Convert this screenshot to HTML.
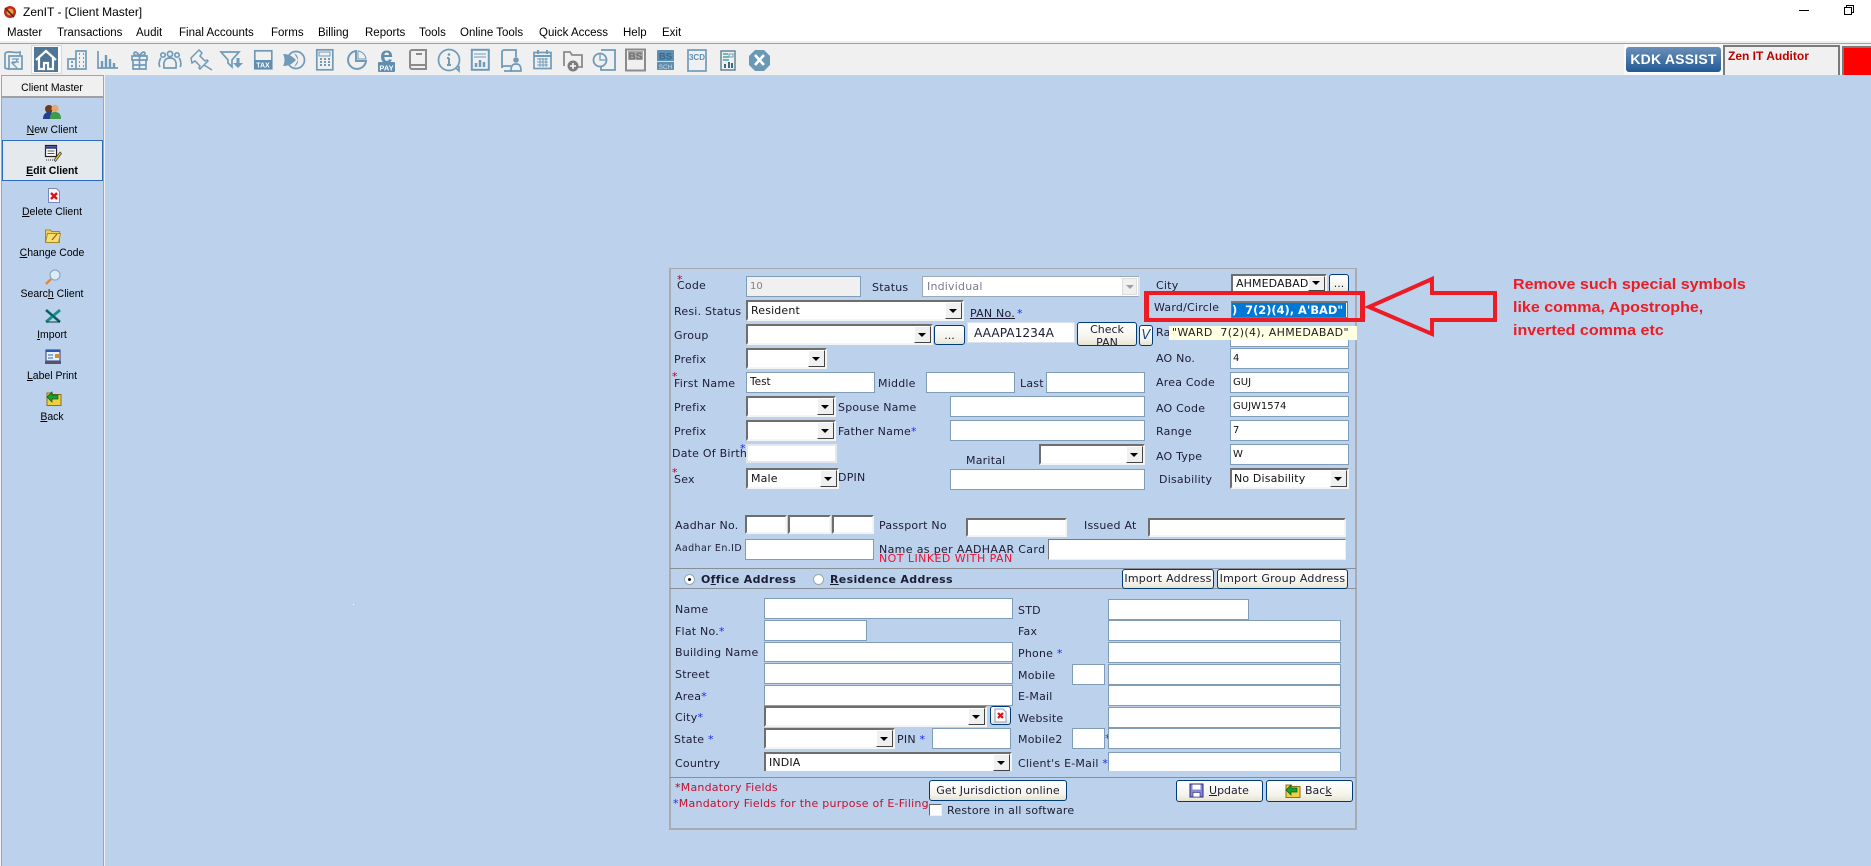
<!DOCTYPE html>
<html><head><meta charset="utf-8"><title>ZenIT - [Client Master]</title>
<style>
html,body{margin:0;padding:0;background:#bcd1eb}
#r{position:relative;width:1871px;height:866px;overflow:hidden;background:#bcd1eb;font-family:"DejaVu Sans",sans-serif}
#r div,#r span.a{position:absolute;box-sizing:border-box}
.m{font:11.5px/16px "Liberation Sans",sans-serif;color:#000;white-space:nowrap;top:25px}
.p{font:11.4px/16px "Liberation Sans",sans-serif;color:#000;white-space:nowrap;width:102px;left:1px;text-align:center;transform:scaleX(.92)}
.t{font:11px/16px "DejaVu Sans",sans-serif;color:#1c1c34;white-space:nowrap;letter-spacing:.22px;margin-top:1px}
.i{background:#fff;border:1px solid #7f9db9;font:10px/19px "DejaVu Sans",sans-serif;color:#111;padding-left:2px;white-space:nowrap;overflow:hidden}
.u{background:#fff;border:2px solid;border-color:#6e6e6e #f4f4f4 #f4f4f4 #6e6e6e}
.s{background:#fff;border:2px solid;border-color:#6e6e6e #f4f4f4 #f4f4f4 #6e6e6e;font:11px/17px "DejaVu Sans",sans-serif;color:#111;padding-left:3px;white-space:nowrap;letter-spacing:.15px}
.s i{position:absolute;right:0;top:0;bottom:0;width:15px;background:#f0f0f0;border:1px solid;border-color:#fff #444 #444 #fff}
.s i:after{content:"";position:absolute;left:3px;top:6px;border:4px solid transparent;border-top:4px solid #000;border-bottom:0}
.s.sm i:after{top:4px}
.b{background:linear-gradient(#fff,#f4f3ea 70%,#e6e3d2);border:1px solid #003c74;border-radius:3px;font:11px/17px "DejaVu Sans",sans-serif;color:#1c1c34;text-align:center;white-space:nowrap;overflow:hidden}
.l{height:1px;background:#8a8f96;left:670px;width:686px}
.st{font:11px/12px "DejaVu Sans",sans-serif}
.cr{color:#b00020}.cb{color:#1c28f0}
</style></head><body><div id="r">

<div style="left:0;top:0;width:1871px;height:41px;background:#fff"></div>
<div style="left:0;top:41px;width:1871px;height:2px;background:#efefef"></div>
<div style="left:0;top:43px;width:1871px;height:1px;background:#a0a0a0"></div>
<div style="left:0;top:44px;width:1871px;height:31px;background:#f0f0f0"></div>

<svg style="position:absolute;left:3px;top:5px" width="14" height="14" viewBox="0 0 14 14"><circle cx="7" cy="7" r="6" fill="#c8261c"/><circle cx="7" cy="7" r="3.5" fill="#e9a33a"/><path d="M2 3l9 9" stroke="#5a2a10" stroke-width="1.6"/></svg>
<div style="left:23px;top:4px;font:12px/16px 'Liberation Sans',sans-serif;color:#000;white-space:nowrap">ZenIT - [Client Master]</div>
<div style="left:1799px;top:10px;width:10px;height:1px;background:#000"></div>
<div style="left:1846px;top:5px;width:8px;height:8px;border:1px solid #000"></div>
<div style="left:1844px;top:7px;width:8px;height:8px;border:1px solid #000;background:#fff"></div>

<div class="m" style="left:7px">Master</div>
<div class="m" style="left:57px">Transactions</div>
<div class="m" style="left:136px">Audit</div>
<div class="m" style="left:179px">Final Accounts</div>
<div class="m" style="left:271px">Forms</div>
<div class="m" style="left:318px">Billing</div>
<div class="m" style="left:365px">Reports</div>
<div class="m" style="left:419px">Tools</div>
<div class="m" style="left:460px">Online Tools</div>
<div class="m" style="left:539px">Quick Access</div>
<div class="m" style="left:623px">Help</div>
<div class="m" style="left:662px">Exit</div>

<div style="left:31px;top:45px;width:31px;height:29px;background:#fafafa;border:1px solid #d8d8d8"></div>
<div style="left:34px;top:47px;width:24px;height:25px;background:#4f7596"></div>

<svg style="position:absolute;left:0;top:0" width="800" height="76" viewBox="0 0 800 76" font-family="Liberation Sans,sans-serif">
<g fill="none" stroke="#6f9bb9" stroke-width="1.7">
<path d="M5 53c5-3 10 1 15-1v3M5 53v15c2 1 3 1 4 1"/><path d="M9 56h13v13H9z"/><path d="M12 59h7M12 62h7M17 59c0 4-3 4-5 4l5 5" stroke-width="1.3"/>
<path d="M36 60l10-9 10 9M39 58v11h5v-6h4v6h5V58" stroke="#fff" stroke-width="2.2"/>
<path d="M76 51h10v18H76zM68 59h8v10h-8z"/><path d="M79 54h1M83 54h1M79 58h1M83 58h1M79 62h1M83 62h1M79 66h1M83 66h1M71 62h2M71 66h2" stroke-width="2"/>
<path d="M98 51v17h20"/><path d="M102 68v-7M106 68V55M110 68v-9M114 68v-5" stroke-width="2.4"/>
<path d="M132 56h15v4h-15zM133 60h13v9h-13zM139.500 56v13M133 65h13M139.500 56c-3-6-7-4-5-1zM139.500 56c3-6 7-4 5-1z"/>
<circle cx="170" cy="54" r="2.6"/><circle cx="163" cy="55" r="2.2"/><circle cx="177" cy="55" r="2.2"/><path d="M164 68c-1-8 2-10 6-10s7 2 6 10zM160 67c-2-3 0-8 1-9M180 67c2-3 0-8-1-9"/>
<path d="M191 58l8-8 3 3-2 3 5 5 2-1 1 1-8 8-1-1 1-2-5-5-3 2zM204 65l8 5" stroke-width="1.500"/>
<path d="M221 52h18l-7 8v7l-4-4v-3z"/><path d="M238 58v6" stroke="#6f9bb9" stroke-width="3"/><path d="M233 63h10l-5 5z" fill="#6f9bb9" stroke="none"/>
<rect x="254.800" y="50.800" width="17" height="18"/>
<rect x="254" y="60" width="18" height="9" fill="#5f8eae" stroke="none"/>
<circle cx="296" cy="60" r="8.500"/><path d="M283 54c6 0 9 2 13 6-4 4-7 6-13 6 2-4 2-8 0-12z" fill="#6f9bb9" stroke="none"/><path d="M294 53a8 8 0 0 1 0 14l4-7z" fill="#6f9bb9" stroke="none"/>
<rect x="316.800" y="49.800" width="16" height="20"/><rect x="319" y="52" width="11" height="4" stroke-width="1"/><path d="M320 59h2M324 59h2M328 59h2M320 62h2M324 62h2M328 62h2M320 65h2M324 65h2M328 65h2" stroke-width="2"/>
<path d="M356 51a9 9 0 1 0 10 10h-10z" stroke-width="2"/><path d="M358 51a9 9 0 0 1 8 8h-8z" stroke-width="1" fill="none"/>
<text x="386.500" y="63" text-anchor="middle" font-size="23" font-weight="bold" fill="#5f8eae" stroke="none">e</text>
<rect x="378" y="62" width="17" height="10" rx="1" fill="#5f8eae" stroke="none"/>
<text x="386.500" y="70.500" text-anchor="middle" font-size="7.500" font-weight="bold" fill="#fff" stroke="none">PAY</text>
<text x="263" y="67.500" text-anchor="middle" font-size="7" font-weight="bold" fill="#fff" stroke="none">TAX</text>

<path d="M410 52a2 2 0 0 1 2-2h14v19h-14a2 2 0 0 1-2-2zM410 65h16M416 54h6" stroke="#8b8b8b" stroke-width="2"/>
<circle cx="449" cy="60" r="10.500"/><path d="M456 68l3 3v-5" /><path d="M449 58v7M447 65h4M447 58h2" stroke-width="2"/><circle cx="449" cy="54.500" r="1.300" fill="#6f9bb9" stroke="none"/>
<rect x="471.800" y="49.800" width="17" height="20" stroke-width="2"/><path d="M474 54h12M474 57h12" stroke-width="1"/><path d="M476 67v-4M480 67v-7M484 67v-5" stroke-width="2.500"/>
<path d="M502 68V52a2 2 0 0 1 2-2h12v7M502 68a2 2 0 0 1 2-2h7M504 71h8" stroke-width="1.800"/><circle cx="516" cy="60" r="2.800" fill="#6f9bb9" stroke="none"/><path d="M511 71c0-6 2-7 5-7s5 1 5 7z"/>
<rect x="534" y="52.500" width="17" height="16"/><path d="M534 56h17" stroke-width="2"/><path d="M538 50v4M547 50v4" stroke-width="2"/><path d="M537 59h11M537 62h11M537 65h11M540 58v9M543 58v9M546 58v9" stroke-width="1"/>
<path d="M564 66V52h6l2 3h10v12h-6" stroke="#8b8b8b" stroke-width="1.800"/><circle cx="573" cy="66" r="5.500" fill="#7d7d7d" stroke="none"/><path d="M570 66h6M573 63v6" stroke="#fff" stroke-width="1.500"/>
<path d="M601 50h14v20h-14v-3" stroke-width="1.800"/><circle cx="600" cy="60" r="6.500" stroke-width="1.800"/><path d="M600 54v6h6" stroke-width="1.300"/>
<rect x="626" y="49.500" width="19" height="21" stroke="#8b8b8b" stroke-width="2"/><rect x="628" y="51" width="15" height="9" fill="#a8a8a8" stroke="none"/>
<text x="635.500" y="59.500" text-anchor="middle" font-size="10" font-weight="bold" fill="#707070" stroke="none">BS</text>
<rect x="657" y="50" width="17" height="20" fill="#5f8eae" stroke="none" rx="1"/><rect x="657" y="61" width="17" height="1" fill="#cfdde8" stroke="none"/>
<text x="665.500" y="59.500" text-anchor="middle" font-size="9.500" font-weight="bold" fill="#35688c" stroke="none">BS</text>
<text x="665.500" y="69" text-anchor="middle" font-size="6.500" fill="#c8d9e6" stroke="none">SCH</text>
<rect x="688" y="50" width="18" height="21" stroke-width="1.700"/>
<text x="697" y="60" text-anchor="middle" font-size="8" font-weight="bold" fill="#5f8eae" stroke="none">3CD</text>
<rect x="721" y="51" width="14" height="19" stroke="#55808f" stroke-width="1.400"/><path d="M723 54h5M723 57h6M723 60h6" stroke="#2f8f90" stroke-width="1.300"/><path d="M729 54h4v3h-4z" stroke-width="1"/><path d="M725 68v-4M729 68v-6M732 68v-5" stroke="#3c6a7f" stroke-width="2"/>
<path d="M755 50h9l6 6v9l-6 6h-9l-6-6v-9z" fill="#6a99b8" stroke="none"/><path d="M755 55l9 10M764 55l-9 10" stroke="#fff" stroke-width="2.600"/>
</g>
</svg>

<div style="left:1624px;top:44px;width:99px;height:31px;background:#fafafa"></div>
<div style="left:1626px;top:47px;width:95px;height:25px;border-radius:3px;background:linear-gradient(#6a8fb8,#225a96);color:#fff;font:bold 14px/25px 'Liberation Sans',sans-serif;text-align:center;letter-spacing:.2px;white-space:nowrap">KDK ASSIST</div>
<div style="left:1723px;top:45px;width:117px;height:30px;border-top:2px solid #7a7a7a;border-left:2px solid #7a7a7a;border-right:2px solid #7a7a7a;background:#f0f0f0;color:#c00000;font:bold 12px/19px 'Liberation Sans',sans-serif;padding-left:3px;white-space:nowrap">Zen IT Auditor</div>
<div style="left:1842px;top:46px;width:29px;height:29px;background:#f00;border-top:2px solid #7a7a7a;border-left:2px solid #7a7a7a"></div>

<!-- left panel -->
<div style="left:0;top:75px;width:105px;height:791px;background:#bcd1eb;border-left:1px solid #f4f4f4;border-right:2px solid #f0f0f0"></div>
<div style="left:1px;top:75px;width:103px;height:791px;border-left:1px solid #a4a4a4;border-right:1px solid #a4a4a4"></div>
<div style="left:1px;top:75px;width:103px;height:23px;background:#f0f0f0;border:1px solid #a4a4a4;border-bottom:2px solid #a0a0a0"></div>
<div class="p" style="top:80px">Client Master</div>
<div style="left:2px;top:140px;width:101px;height:41px;background:#e4e9ee;border:1px solid #2a6cc0"></div>

<svg style="position:absolute;left:43px;top:104px" width="18" height="16" viewBox="0 0 18 16"><circle cx="6" cy="5" r="4" fill="#6a3a1a"/><path d="M0 15c0-5 3-7 6-7s6 2 6 7z" fill="#233f8f"/><circle cx="12" cy="4.500" r="3.600" fill="#e6a868"/><path d="M7 15c0-6 2-7 5-7s6 1 6 7z" fill="#3f9a4c"/></svg>
<svg style="position:absolute;left:44px;top:144px" width="18" height="19" viewBox="0 0 18 19"><rect x="1.500" y="1.500" width="11" height="11" fill="#fff" stroke="#222" stroke-width="1.200"/><path d="M1 3.500h12" stroke="#2a3f8f" stroke-width="2.500"/><path d="M3.500 7h7M3.500 9.500h7" stroke="#555"/><path d="M2 16h7" stroke="#333" stroke-dasharray="1 1"/><path d="M10 16l6-8 1.500 1.500-6 8z" fill="#f0d030" stroke="#333" stroke-width=".7"/></svg>
<svg style="position:absolute;left:47px;top:187px" width="14" height="17" viewBox="0 0 14 17"><path d="M1.500 1.500h8l3 3v11h-11z" fill="#f8f8ff" stroke="#7a88c0"/><path d="M4 6l6 6M10 6l-6 6" stroke="#e0101a" stroke-width="2.400"/></svg>
<svg style="position:absolute;left:45px;top:227px" width="16" height="16" viewBox="0 0 16 16"><path d="M.5 3h5l1 1.500h8v11H.5z" fill="#f0cf60" stroke="#a8882c"/><path d="M2.500 6.500h13l-2 9H.5z" fill="#f8e070" stroke="#a8882c"/><path d="M7 13l5-6" stroke="#a06020" stroke-width="1.300"/></svg>
<svg style="position:absolute;left:45px;top:269px" width="16" height="16" viewBox="0 0 16 16"><circle cx="10" cy="6" r="5" fill="#dcecfb" stroke="#8ca8c8" stroke-width="1.200"/><path d="M6 10l-5 5" stroke="#e08a38" stroke-width="2.400"/></svg>
<svg style="position:absolute;left:45px;top:309px" width="16" height="14" viewBox="0 0 16 14"><path d="M1 1l14 12M15 1L1 13" stroke="#1a8a8a" stroke-width="2.800"/><path d="M1 1l14 12" stroke="#0a3a3a" stroke-width="1"/><path d="M1 13h14" stroke="#0a3a3a"/></svg>
<svg style="position:absolute;left:45px;top:349px" width="16" height="16" viewBox="0 0 16 16"><rect x="1" y="1" width="14" height="11" fill="#e8f0fb" stroke="#2a3a7a"/><path d="M1 2h14" stroke="#2a5ab0" stroke-width="2"/><path d="M3 6h5M3 9h5" stroke="#2a6ab0"/><rect x="10" y="5" width="4" height="4" fill="#d09030"/><rect x="0" y="12" width="16" height="3" fill="#556"/></svg>
<svg style="position:absolute;left:46px;top:390px" width="16" height="16" viewBox="0 0 16 16"><path d="M1 3h5l1 1.500h8v11H1z" fill="#f0d040" stroke="#8a7020"/><path d="M1 7l5-5v3h6v4H6v3z" fill="#18a030" stroke="#085a18" stroke-width=".7"/></svg>

<div class="p" style="top:122px"><u>N</u>ew Client</div>
<div class="p" style="top:163px;font-weight:bold"><u>E</u>dit Client</div>
<div class="p" style="top:204px"><u>D</u>elete Client</div>
<div class="p" style="top:245px"><u>C</u>hange Code</div>
<div class="p" style="top:286px">Searc<u>h</u> Client</div>
<div class="p" style="top:327px"><u>I</u>mport</div>
<div class="p" style="top:368px"><u>L</u>abel Print</div>
<div class="p" style="top:409px"><u>B</u>ack</div>

<div style="left:353px;top:604px;width:1px;height:1px;background:#fff"></div>

<!-- form -->
<div style="left:669px;top:268px;width:688px;height:562px;border:2px solid #a8acb0;border-top-width:1px"></div>

<div class="t" style="left:677px;top:277px">Code</div>
<div class="st cr" style="left:677px;top:274px">*</div>
<div class="i" style="left:746px;top:276px;width:115px;height:21px;background:#f0f0f0;color:#808080;padding-left:3px">10</div>
<div class="t" style="left:872px;top:279px">Status</div>
<div style="left:922px;top:276px;width:218px;height:21px;background:#fff;border:1px solid #9aa8b8;border-right:2px solid #dce4ee;font:11px/19px 'DejaVu Sans',sans-serif;color:#7d7a90;padding-left:4px;letter-spacing:.2px">Individual</div>
<div style="left:1122px;top:278px;width:15px;height:17px;background:#f0f0f0;border:1px solid #ddd"></div>
<div style="left:1126px;top:285px;border:4px solid transparent;border-top:4px solid #a0a0a0;border-bottom:0"></div>

<div class="t" style="left:674px;top:303px">Resi. Status</div>
<div class="s" style="left:746px;top:300px;width:218px;height:21px">Resident<i></i></div>
<div class="t" style="left:970px;top:305px;text-decoration:underline">PAN No.</div>
<div class="st cb" style="left:1017px;top:308px">*</div>

<div class="t" style="left:674px;top:327px">Group</div>
<div class="s" style="left:746px;top:324px;width:187px;height:21px"><i></i></div>
<div class="b" style="left:934px;top:325px;width:31px;height:20px;line-height:20px">...</div>
<div class="i" style="left:967px;top:322px;width:108px;height:21px;border-color:#d8e2ee;font-size:12.2px;line-height:20px;padding-left:6px;color:#1c1c34">AAAPA1234A</div>
<div class="b" style="left:1077px;top:322px;width:60px;height:24px;font-size:11px;line-height:13px;padding-top:0">Check<br>PAN</div>
<div class="b" style="left:1139px;top:325px;width:14px;height:21px;font-style:italic;font-size:13px;line-height:20px;color:#1c4a8a">V</div>

<div class="t" style="left:674px;top:351px">Prefix</div>
<div class="s" style="left:746px;top:348px;width:81px;height:21px"><i></i></div>

<div class="t" style="left:674px;top:375px">First Name</div>
<div class="st cr" style="left:672px;top:371px">*</div>
<div class="i" style="left:746px;top:372px;width:129px;height:21px;padding-left:3px;font-size:10.500px;line-height:18px">Test</div>
<div class="t" style="left:878px;top:375px">Middle</div>
<div class="i" style="left:926px;top:372px;width:89px;height:21px"></div>
<div class="t" style="left:1020px;top:375px">Last</div>
<div class="i" style="left:1046px;top:372px;width:99px;height:21px"></div>

<div class="t" style="left:674px;top:399px">Prefix</div>
<div class="s" style="left:746px;top:396px;width:90px;height:21px"><i></i></div>
<div class="t" style="left:838px;top:399px">Spouse Name</div>
<div class="i" style="left:950px;top:396px;width:195px;height:21px"></div>

<div class="t" style="left:674px;top:423px">Prefix</div>
<div class="s" style="left:746px;top:420px;width:90px;height:21px"><i></i></div>
<div class="t" style="left:838px;top:423px">Father Name<span class="cb">*</span></div>
<div class="i" style="left:950px;top:420px;width:195px;height:21px"></div>

<div class="t" style="left:672px;top:445px">Date Of Birth</div>
<div class="st cb" style="left:740px;top:443px">*</div>
<div class="u" style="left:746px;top:444px;width:91px;height:19px;border-color:#e4e8ee"></div>
<div class="t" style="left:966px;top:452px">Marital</div>
<div class="s" style="left:1039px;top:444px;width:106px;height:21px"><i></i></div>

<div class="t" style="left:674px;top:471px">Sex</div>
<div class="st cr" style="left:672px;top:467px">*</div>
<div class="s" style="left:746px;top:468px;width:93px;height:21px">Male<i></i></div>
<div class="t" style="left:838px;top:469px">DPIN</div>
<div class="i" style="left:950px;top:469px;width:195px;height:21px"></div>

<div class="t" style="left:1156px;top:277px">City</div>
<div class="s sm" style="left:1231px;top:274px;width:96px;height:19px;line-height:15px;padding-left:3px;overflow:hidden;font-size:11px;letter-spacing:.1px">AHMEDABAD<i></i></div>
<div class="b" style="left:1329px;top:274px;width:20px;height:19px">...</div>

<div class="t" style="left:1154px;top:299px">Ward/Circle</div>
<div style="left:1231px;top:301px;width:117px;height:17px;background:#fff;border:1px solid #777;border-top-width:2px"></div>
<div style="left:1232px;top:303px;width:114px;height:14px;background:#0078d7;color:#fff;font:bold 11.4px/15px 'DejaVu Sans',sans-serif;white-space:pre;overflow:hidden;padding-left:0">)  7(2)(4), A'BAD"</div>

<div class="t" style="left:1156px;top:324px">Ra</div>
<div class="i" style="left:1230px;top:326px;width:119px;height:21px"></div>
<div style="left:1169px;top:326px;width:188px;height:14px;background:#ffffe1;font:11px/14px 'DejaVu Sans',sans-serif;color:#222;padding-left:3px;white-space:pre;letter-spacing:.35px">"WARD  7(2)(4), AHMEDABAD"</div>

<div class="t" style="left:1156px;top:350px">AO No.</div>
<div class="i" style="left:1230px;top:348px;width:119px;height:21px">4</div>
<div class="t" style="left:1156px;top:374px">Area Code</div>
<div class="i" style="left:1230px;top:372px;width:119px;height:21px">GUJ</div>
<div class="t" style="left:1156px;top:400px">AO Code</div>
<div class="i" style="left:1230px;top:396px;width:119px;height:21px">GUJW1574</div>
<div class="t" style="left:1156px;top:423px">Range</div>
<div class="i" style="left:1230px;top:420px;width:119px;height:21px">7</div>
<div class="t" style="left:1156px;top:448px">AO Type</div>
<div class="i" style="left:1230px;top:444px;width:119px;height:21px">W</div>
<div class="t" style="left:1159px;top:471px">Disability</div>
<div class="s" style="left:1230px;top:468px;width:119px;height:21px;padding-left:2px">No Disability<i></i></div>

<div class="t" style="left:675px;top:517px">Aadhar No.</div>
<div class="u" style="left:745px;top:515px;width:42px;height:19px"></div>
<div class="u" style="left:788px;top:515px;width:43px;height:19px"></div>
<div class="u" style="left:832px;top:515px;width:42px;height:19px"></div>
<div class="t" style="left:879px;top:517px">Passport No</div>
<div class="u" style="left:966px;top:518px;width:101px;height:19px"></div>
<div class="t" style="left:1084px;top:517px">Issued At</div>
<div class="u" style="left:1148px;top:518px;width:198px;height:19px"></div>

<div class="t" style="left:675px;top:540px;font-size:9.500px;letter-spacing:.4px">Aadhar En.ID</div>
<div class="i" style="left:745px;top:539px;width:129px;height:21px"></div>
<div class="t" style="left:879px;top:541px;letter-spacing:.35px">Name as per AADHAAR Card</div>
<div class="u" style="left:1048px;top:539px;width:298px;height:21px;border-width:1px;border-color:#777 #eee #eee #777"></div>
<div class="t" style="left:879px;top:551px;color:#ee1030;line-height:14px;letter-spacing:.45px">NOT LINKED WITH PAN</div>

<div class="l" style="top:568px"></div>
<div class="l" style="top:588px"></div>
<div style="left:684px;top:574px;width:11px;height:11px;border-radius:50%;background:#fff;border:1px solid #9aa"></div>
<div style="left:688px;top:578px;width:3px;height:3px;border-radius:50%;background:#111"></div>
<div style="left:813px;top:574px;width:11px;height:11px;border-radius:50%;background:#fff;border:1px solid #9aa"></div>
<div class="t" style="left:701px;top:571px;font-weight:bold;letter-spacing:.32px">O<u>f</u>fice Address</div>
<div class="t" style="left:830px;top:571px;font-weight:bold;letter-spacing:.32px"><u>R</u>esidence Address</div>
<div class="b" style="left:1122px;top:569px;width:92px;height:20px;line-height:18px;letter-spacing:.25px">Import Address</div>
<div class="b" style="left:1217px;top:569px;width:131px;height:20px;line-height:18px;letter-spacing:.25px">Import Group Address</div>

<div class="t" style="left:675px;top:601px">Name</div>
<div class="i" style="left:764px;top:598px;width:249px;height:21px"></div>
<div class="t" style="left:675px;top:623px">Flat No.<span class="cb">*</span></div>
<div class="i" style="left:764px;top:620px;width:103px;height:21px"></div>
<div class="t" style="left:675px;top:644px">Building Name</div>
<div class="i" style="left:764px;top:642px;width:249px;height:20px"></div>
<div class="t" style="left:675px;top:666px">Street</div>
<div class="i" style="left:764px;top:663px;width:249px;height:21px"></div>
<div class="t" style="left:675px;top:688px">Area<span class="cb">*</span></div>
<div class="i" style="left:764px;top:685px;width:249px;height:21px"></div>
<div class="t" style="left:675px;top:709px">City<span class="cb">*</span></div>
<div class="s" style="left:764px;top:706px;width:223px;height:21px"><i></i></div>
<div class="b" style="left:990px;top:706px;width:21px;height:19px"></div>
<svg style="position:absolute;left:994px;top:708px" width="13" height="15" viewBox="0 0 13 15"><path d="M1 1h8l3 3v10H1z" fill="#fff" stroke="#8a98c8"/><path d="M4 5l5 5M9 5l-5 5" stroke="#e0101a" stroke-width="2.200"/></svg>
<div class="t" style="left:674px;top:731px">State <span class="cb">*</span></div>
<div class="s" style="left:764px;top:728px;width:131px;height:21px"><i></i></div>
<div class="t" style="left:897px;top:731px">PIN <span class="cb">*</span></div>
<div class="i" style="left:932px;top:728px;width:79px;height:21px"></div>
<div class="t" style="left:675px;top:755px">Country</div>
<div class="s" style="left:764px;top:752px;width:248px;height:19px;border-bottom:0">INDIA<i></i></div>

<div class="t" style="left:1018px;top:602px">STD</div>
<div class="i" style="left:1108px;top:599px;width:141px;height:21px"></div>
<div class="t" style="left:1018px;top:623px">Fax</div>
<div class="i" style="left:1108px;top:620px;width:233px;height:21px"></div>
<div class="t" style="left:1018px;top:645px">Phone <span class="cb">*</span></div>
<div class="i" style="left:1108px;top:642px;width:233px;height:21px"></div>
<div class="t" style="left:1018px;top:667px">Mobile</div>
<div class="i" style="left:1072px;top:664px;width:33px;height:21px"></div>
<div class="i" style="left:1108px;top:664px;width:233px;height:21px"></div>
<div class="t" style="left:1018px;top:688px">E-Mail</div>
<div class="i" style="left:1108px;top:685px;width:233px;height:21px"></div>
<div class="t" style="left:1018px;top:710px">Website</div>
<div class="i" style="left:1108px;top:707px;width:233px;height:21px"></div>
<div class="t" style="left:1018px;top:731px">Mobile2</div>
<div class="i" style="left:1072px;top:728px;width:33px;height:21px"></div>
<div class="st cb" style="left:1105px;top:733px">*</div>
<div class="i" style="left:1108px;top:728px;width:233px;height:21px"></div>
<div class="t" style="left:1018px;top:755px">Client's E-Mail <span class="cb">*</span></div>
<div class="i" style="left:1108px;top:752px;width:233px;height:19px;border-bottom:0"></div>

<div class="l" style="top:777px"></div>
<div class="t" style="left:675px;top:779px;color:#c8102e"><span style="color:#b00020">*</span>Mandatory Fields</div>
<div class="t" style="left:673px;top:795px;color:#c8102e;letter-spacing:.25px"><span class="cb">*</span>Mandatory Fields for the purpose of E-Filing</div>
<div class="b" style="left:929px;top:780px;width:138px;height:21px;line-height:19px;letter-spacing:.12px">Get Jurisdiction online</div>
<div class="u" style="left:929px;top:804px;width:13px;height:12px;border-width:1px;border-color:#666 #eee #eee #666"></div>
<div class="t" style="left:947px;top:802px">Restore in all software</div>

<div class="b" style="left:1176px;top:780px;width:87px;height:22px;line-height:20px;text-align:left;padding-left:32px"><u>U</u>pdate</div>
<svg style="position:absolute;left:1189px;top:783px" width="15" height="15" viewBox="0 0 15 15"><path d="M1 1h13v13H1z" fill="#8888d8" stroke="#2a2a7a"/><rect x="3.500" y="1.500" width="8" height="5" fill="#fff"/><rect x="4" y="9.500" width="7" height="4.500" fill="#fff" stroke="#2a2a7a" stroke-width=".6"/></svg>
<div class="b" style="left:1266px;top:780px;width:87px;height:22px;line-height:20px;text-align:left;padding-left:38px">Bac<u>k</u></div>
<svg style="position:absolute;left:1285px;top:783px" width="16" height="15" viewBox="0 0 16 15"><path d="M1 2h5l1 1.500h8v11H1z" fill="#f0d040" stroke="#8a7020"/><path d="M1 7l5-5v3h6v4H6v3z" fill="#18a030" stroke="#085a18" stroke-width=".7"/></svg>

<!-- annotation -->
<div style="left:1144px;top:291px;width:221px;height:31px;border:4px solid #ed1c24;border-width:4px 5px 4px 5px"></div>
<svg style="position:absolute;left:1360px;top:270px" width="145" height="72" viewBox="1360 270 145 72"><path d="M1369 307L1432 279V293H1495V320H1432V334Z" fill="none" stroke="#ed1c24" stroke-width="4" stroke-linejoin="miter"/></svg>
<div style="left:1513px;top:273px;font:bold 15px/23px 'Liberation Sans',sans-serif;color:#ed1c24;white-space:nowrap;transform:scaleX(1.07);transform-origin:0 0">Remove such special symbols<br>like comma, Apostrophe,<br>inverted comma etc</div>

</div></body></html>
